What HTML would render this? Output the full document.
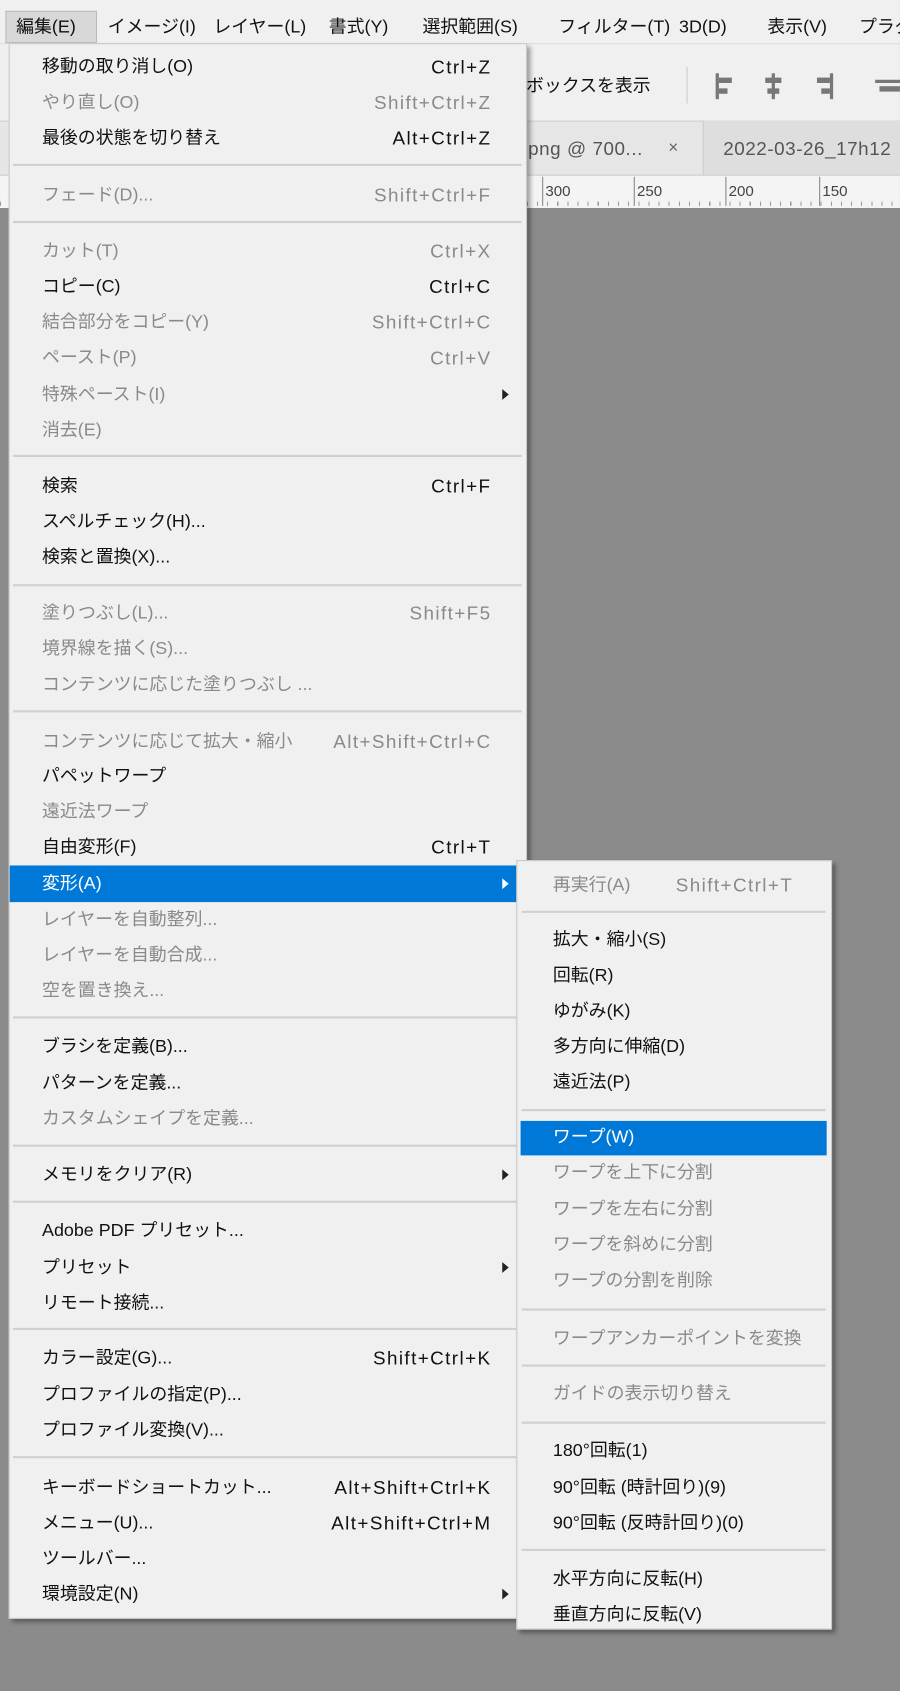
<!DOCTYPE html>
<html><head><meta charset="utf-8"><style>
html,body{margin:0;padding:0;width:900px;height:1691px;overflow:hidden;background:#8b8b8b}
#w{position:absolute;left:0;top:0;width:835px;height:1569px;transform:scale(1.0778);transform-origin:0 0;font-family:"Liberation Sans","Noto Sans CJK JP",sans-serif;font-size:16.6px;color:#111}
.a{position:absolute}
.t{position:absolute;white-space:nowrap;line-height:22px}
.t[style*="right"],.s{letter-spacing:1.3px;font-size:17.5px}
.g{color:#8a8a8a}
.sep{position:absolute;height:2px;background:#d0d0d0}
.arr{position:absolute;width:0;height:0;border-top:5px solid transparent;border-bottom:5px solid transparent;border-left:6px solid #222}
</style></head><body><div id="w">
<!-- top bar -->
<div class="a" style="left:0;top:0;width:835px;height:112px;background:#f0f0f0"></div>
<div class="a" style="left:0;top:40px;width:835px;height:1px;background:#ddd"></div>
<div class="a" style="left:5px;top:10px;width:83px;height:28px;background:#d8d8d8;border:1px solid #bbb"></div>
<div class="t" style="left:15px;top:14px">編集(E)</div>
<div class="t" style="left:100px;top:14px">イメージ(I)</div>
<div class="t" style="left:198px;top:14px">レイヤー(L)</div>
<div class="t" style="left:305px;top:14px">書式(Y)</div>
<div class="t" style="left:392px;top:14px">選択範囲(S)</div>
<div class="t" style="left:518px;top:14px">フィルター(T)</div>
<div class="t" style="left:630px;top:14px">3D(D)</div>
<div class="t" style="left:712px;top:14px">表示(V)</div>
<div class="t" style="left:797px;top:14px">プラグ</div>
<div class="t" style="left:488px;top:69px">ボックスを表示</div>
<div class="a" style="left:637px;top:62px;width:1px;height:34px;background:#ccc"></div>
<div class="a" style="left:664px;top:68px;width:3px;height:24px;background:#777"></div><div class="a" style="left:667px;top:72px;width:12px;height:5px;background:#777"></div><div class="a" style="left:667px;top:82px;width:8px;height:5px;background:#777"></div>
<div class="a" style="left:716px;top:68px;width:3px;height:24px;background:#777"></div><div class="a" style="left:710px;top:72px;width:15px;height:5px;background:#777"></div><div class="a" style="left:712px;top:82px;width:11px;height:5px;background:#777"></div>
<div class="a" style="left:770px;top:68px;width:3px;height:24px;background:#777"></div><div class="a" style="left:758px;top:72px;width:12px;height:5px;background:#777"></div><div class="a" style="left:762px;top:82px;width:8px;height:5px;background:#777"></div>
<div class="a" style="left:812px;top:74px;width:23px;height:3px;background:#777"></div><div class="a" style="left:816px;top:80px;width:19px;height:5px;background:#777"></div>
<!-- tabs -->
<div class="a" style="left:0;top:112px;width:835px;height:50px;background:#e6e6e6;border-top:1px solid #d4d4d4"></div>
<div class="a" style="left:652px;top:112px;width:183px;height:50px;background:#dedede;border-left:1px solid #ccc"></div>
<div class="t s" style="left:490px;top:127px;color:#555;letter-spacing:0.5px">png @ 700...</div>
<div class="t" style="left:620px;top:127px;color:#666;font-size:16px">×</div>
<div class="t s" style="left:671px;top:127px;color:#555;letter-spacing:0.5px">2022-03-26_17h12</div>
<!-- ruler -->
<div class="a" style="left:0;top:162px;width:835px;height:30px;background:#f4f4f4;border-top:1px solid #ccc"></div>
<div class="a" style="left:0;top:183px;width:835px;height:8px;background:repeating-linear-gradient(90deg,#999 0 1px,transparent 1px 9.4px)"></div>
<div class="a" style="left:0;top:183px;width:835px;height:4px;background:#f4f4f4"></div>
<div class="a" style="left:503px;top:164px;width:1px;height:27px;background:#888"></div><div class="t" style="left:506px;top:166px;font-size:14px;color:#444">300</div>
<div class="a" style="left:588px;top:164px;width:1px;height:27px;background:#888"></div><div class="t" style="left:591px;top:166px;font-size:14px;color:#444">250</div>
<div class="a" style="left:673px;top:164px;width:1px;height:27px;background:#888"></div><div class="t" style="left:676px;top:166px;font-size:14px;color:#444">200</div>
<div class="a" style="left:760px;top:164px;width:1px;height:27px;background:#888"></div><div class="t" style="left:763px;top:166px;font-size:14px;color:#444">150</div>
<!-- main menu -->
<div class="a" style="left:8px;top:40px;width:479px;height:1460px;background:#f0f0f0;border:1px solid #c8c8c8;box-shadow:3px 3px 4px rgba(0,0,0,.35)"></div>
<div class="a" style="left:9px;top:803px;width:478px;height:34px;background:#0078d7"></div>
<div class="sep" style="left:12px;top:152px;width:472px"></div>
<div class="sep" style="left:12px;top:205px;width:472px"></div>
<div class="sep" style="left:12px;top:422px;width:472px"></div>
<div class="sep" style="left:12px;top:542px;width:472px"></div>
<div class="sep" style="left:12px;top:659px;width:472px"></div>
<div class="sep" style="left:12px;top:943px;width:472px"></div>
<div class="sep" style="left:12px;top:1062px;width:472px"></div>
<div class="sep" style="left:12px;top:1114px;width:472px"></div>
<div class="sep" style="left:12px;top:1232px;width:472px"></div>
<div class="sep" style="left:12px;top:1351px;width:472px"></div>
<div class="t" style="left:39px;top:51px">移動の取り消し(O)</div><div class="t" style="right:379px;top:51px">Ctrl+Z</div>
<div class="t g" style="left:39px;top:84px">やり直し(O)</div><div class="t g" style="right:379px;top:84px">Shift+Ctrl+Z</div>
<div class="t" style="left:39px;top:117px">最後の状態を切り替え</div><div class="t" style="right:379px;top:117px">Alt+Ctrl+Z</div>
<div class="t g" style="left:39px;top:170px">フェード(D)...</div><div class="t g" style="right:379px;top:170px">Shift+Ctrl+F</div>
<div class="t g" style="left:39px;top:222px">カット(T)</div><div class="t g" style="right:379px;top:222px">Ctrl+X</div>
<div class="t" style="left:39px;top:255px">コピー(C)</div><div class="t" style="right:379px;top:255px">Ctrl+C</div>
<div class="t g" style="left:39px;top:288px">結合部分をコピー(Y)</div><div class="t g" style="right:379px;top:288px">Shift+Ctrl+C</div>
<div class="t g" style="left:39px;top:321px">ペースト(P)</div><div class="t g" style="right:379px;top:321px">Ctrl+V</div>
<div class="t g" style="left:39px;top:355px">特殊ペースト(I)</div><div class="arr" style="left:466px;top:361px"></div>
<div class="t g" style="left:39px;top:388px">消去(E)</div>
<div class="t" style="left:39px;top:440px">検索</div><div class="t" style="right:379px;top:440px">Ctrl+F</div>
<div class="t" style="left:39px;top:473px">スペルチェック(H)...</div>
<div class="t" style="left:39px;top:506px">検索と置換(X)...</div>
<div class="t g" style="left:39px;top:558px">塗りつぶし(L)...</div><div class="t g" style="right:379px;top:558px">Shift+F5</div>
<div class="t g" style="left:39px;top:591px">境界線を描く(S)...</div>
<div class="t g" style="left:39px;top:624px">コンテンツに応じた塗りつぶし ...</div>
<div class="t g" style="left:39px;top:677px">コンテンツに応じて拡大・縮小</div><div class="t g" style="right:379px;top:677px">Alt+Shift+Ctrl+C</div>
<div class="t" style="left:39px;top:709px">パペットワープ</div>
<div class="t g" style="left:39px;top:742px">遠近法ワープ</div>
<div class="t" style="left:39px;top:775px">自由変形(F)</div><div class="t" style="right:379px;top:775px">Ctrl+T</div>
<div class="t" style="left:39px;top:809px;color:#fff">変形(A)</div><div class="arr" style="left:466px;top:815px;border-left-color:#fff"></div>
<div class="t g" style="left:39px;top:842px">レイヤーを自動整列...</div>
<div class="t g" style="left:39px;top:875px">レイヤーを自動合成...</div>
<div class="t g" style="left:39px;top:908px">空を置き換え...</div>
<div class="t" style="left:39px;top:960px">ブラシを定義(B)...</div>
<div class="t" style="left:39px;top:994px">パターンを定義...</div>
<div class="t g" style="left:39px;top:1027px">カスタムシェイプを定義...</div>
<div class="t" style="left:39px;top:1079px">メモリをクリア(R)</div><div class="arr" style="left:466px;top:1085px"></div>
<div class="t" style="left:39px;top:1131px">Adobe PDF プリセット...</div>
<div class="t" style="left:39px;top:1165px">プリセット</div><div class="arr" style="left:466px;top:1171px"></div>
<div class="t" style="left:39px;top:1198px">リモート接続...</div>
<div class="t" style="left:39px;top:1249px">カラー設定(G)...</div><div class="t" style="right:379px;top:1249px">Shift+Ctrl+K</div>
<div class="t" style="left:39px;top:1283px">プロファイルの指定(P)...</div>
<div class="t" style="left:39px;top:1316px">プロファイル変換(V)...</div>
<div class="t" style="left:39px;top:1369px">キーボードショートカット...</div><div class="t" style="right:379px;top:1369px">Alt+Shift+Ctrl+K</div>
<div class="t" style="left:39px;top:1402px">メニュー(U)...</div><div class="t" style="right:379px;top:1402px">Alt+Shift+Ctrl+M</div>
<div class="t" style="left:39px;top:1435px">ツールバー...</div>
<div class="t" style="left:39px;top:1468px">環境設定(N)</div><div class="arr" style="left:466px;top:1474px"></div>
<!-- submenu -->
<div class="a" style="left:479px;top:798px;width:291px;height:712px;background:#f0f0f0;border:1px solid #c8c8c8;box-shadow:3px 3px 4px rgba(0,0,0,.35)"></div>
<div class="a" style="left:483px;top:1040px;width:284px;height:32px;background:#0078d7"></div>
<div class="sep" style="left:484px;top:845px;width:282px"></div>
<div class="sep" style="left:484px;top:1029px;width:282px"></div>
<div class="sep" style="left:484px;top:1214px;width:282px"></div>
<div class="sep" style="left:484px;top:1266px;width:282px"></div>
<div class="sep" style="left:484px;top:1319px;width:282px"></div>
<div class="sep" style="left:484px;top:1437px;width:282px"></div>
<div class="t g" style="left:513px;top:810px">再実行(A)</div><div class="t g s" style="left:627px;top:810px">Shift+Ctrl+T</div>
<div class="t" style="left:513px;top:861px">拡大・縮小(S)</div>
<div class="t" style="left:513px;top:894px">回転(R)</div>
<div class="t" style="left:513px;top:927px">ゆがみ(K)</div>
<div class="t" style="left:513px;top:960px">多方向に伸縮(D)</div>
<div class="t" style="left:513px;top:993px">遠近法(P)</div>
<div class="t" style="left:513px;top:1044px;color:#fff">ワープ(W)</div>
<div class="t g" style="left:513px;top:1077px">ワープを上下に分割</div>
<div class="t g" style="left:513px;top:1111px">ワープを左右に分割</div>
<div class="t g" style="left:513px;top:1144px">ワープを斜めに分割</div>
<div class="t g" style="left:513px;top:1177px">ワープの分割を削除</div>
<div class="t g" style="left:513px;top:1231px">ワープアンカーポイントを変換</div>
<div class="t g" style="left:513px;top:1282px">ガイドの表示切り替え</div>
<div class="t" style="left:513px;top:1335px">180°回転(1)</div>
<div class="t" style="left:513px;top:1369px">90°回転 (時計回り)(9)</div>
<div class="t" style="left:513px;top:1402px">90°回転 (反時計回り)(0)</div>
<div class="t" style="left:513px;top:1454px">水平方向に反転(H)</div>
<div class="t" style="left:513px;top:1487px">垂直方向に反転(V)</div>
</div></body></html>
